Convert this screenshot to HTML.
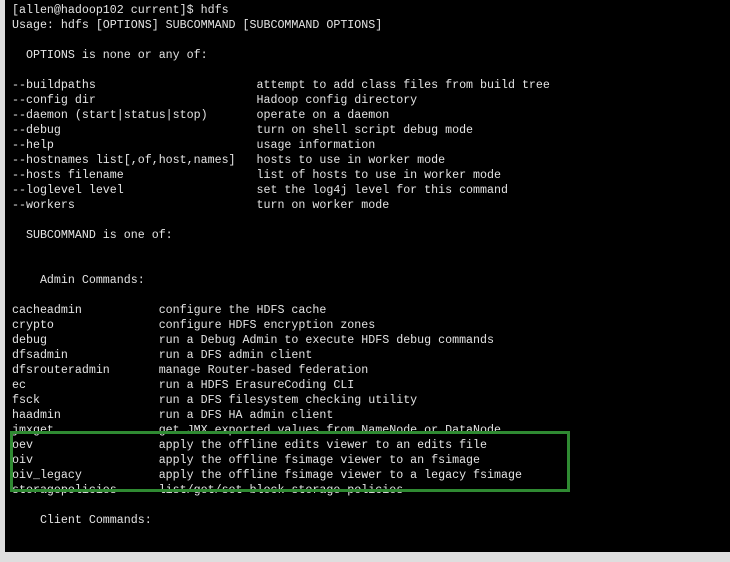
<!DOCTYPE html>
<html><head><style>
html,body{margin:0;padding:0;}
body{width:730px;height:562px;background:#dedede;position:relative;overflow:hidden;}
.term{position:absolute;left:5px;top:0;width:725px;height:552px;background:#000;}
pre{position:absolute;left:7px;top:3px;margin:0;font-family:"Liberation Mono","DejaVu Sans Mono",monospace;font-size:11.65px;line-height:15px;color:#e4e4e4;}
.box{position:absolute;left:10px;top:431px;width:554px;height:55px;border:3px solid #2f8a32;}
</style></head><body>
<div class="term"><pre>[allen@hadoop102 current]$ hdfs
Usage: hdfs [OPTIONS] SUBCOMMAND [SUBCOMMAND OPTIONS]

  OPTIONS is none or any of:

--buildpaths                       attempt to add class files from build tree
--config dir                       Hadoop config directory
--daemon (start|status|stop)       operate on a daemon
--debug                            turn on shell script debug mode
--help                             usage information
--hostnames list[,of,host,names]   hosts to use in worker mode
--hosts filename                   list of hosts to use in worker mode
--loglevel level                   set the log4j level for this command
--workers                          turn on worker mode

  SUBCOMMAND is one of:


    Admin Commands:

cacheadmin           configure the HDFS cache
crypto               configure HDFS encryption zones
debug                run a Debug Admin to execute HDFS debug commands
dfsadmin             run a DFS admin client
dfsrouteradmin       manage Router-based federation
ec                   run a HDFS ErasureCoding CLI
fsck                 run a DFS filesystem checking utility
haadmin              run a DFS HA admin client
jmxget               get JMX exported values from NameNode or DataNode.
oev                  apply the offline edits viewer to an edits file
oiv                  apply the offline fsimage viewer to an fsimage
oiv_legacy           apply the offline fsimage viewer to a legacy fsimage
storagepolicies      list/get/set block storage policies

    Client Commands:
</pre></div>
<div class="box"></div>
</body></html>
